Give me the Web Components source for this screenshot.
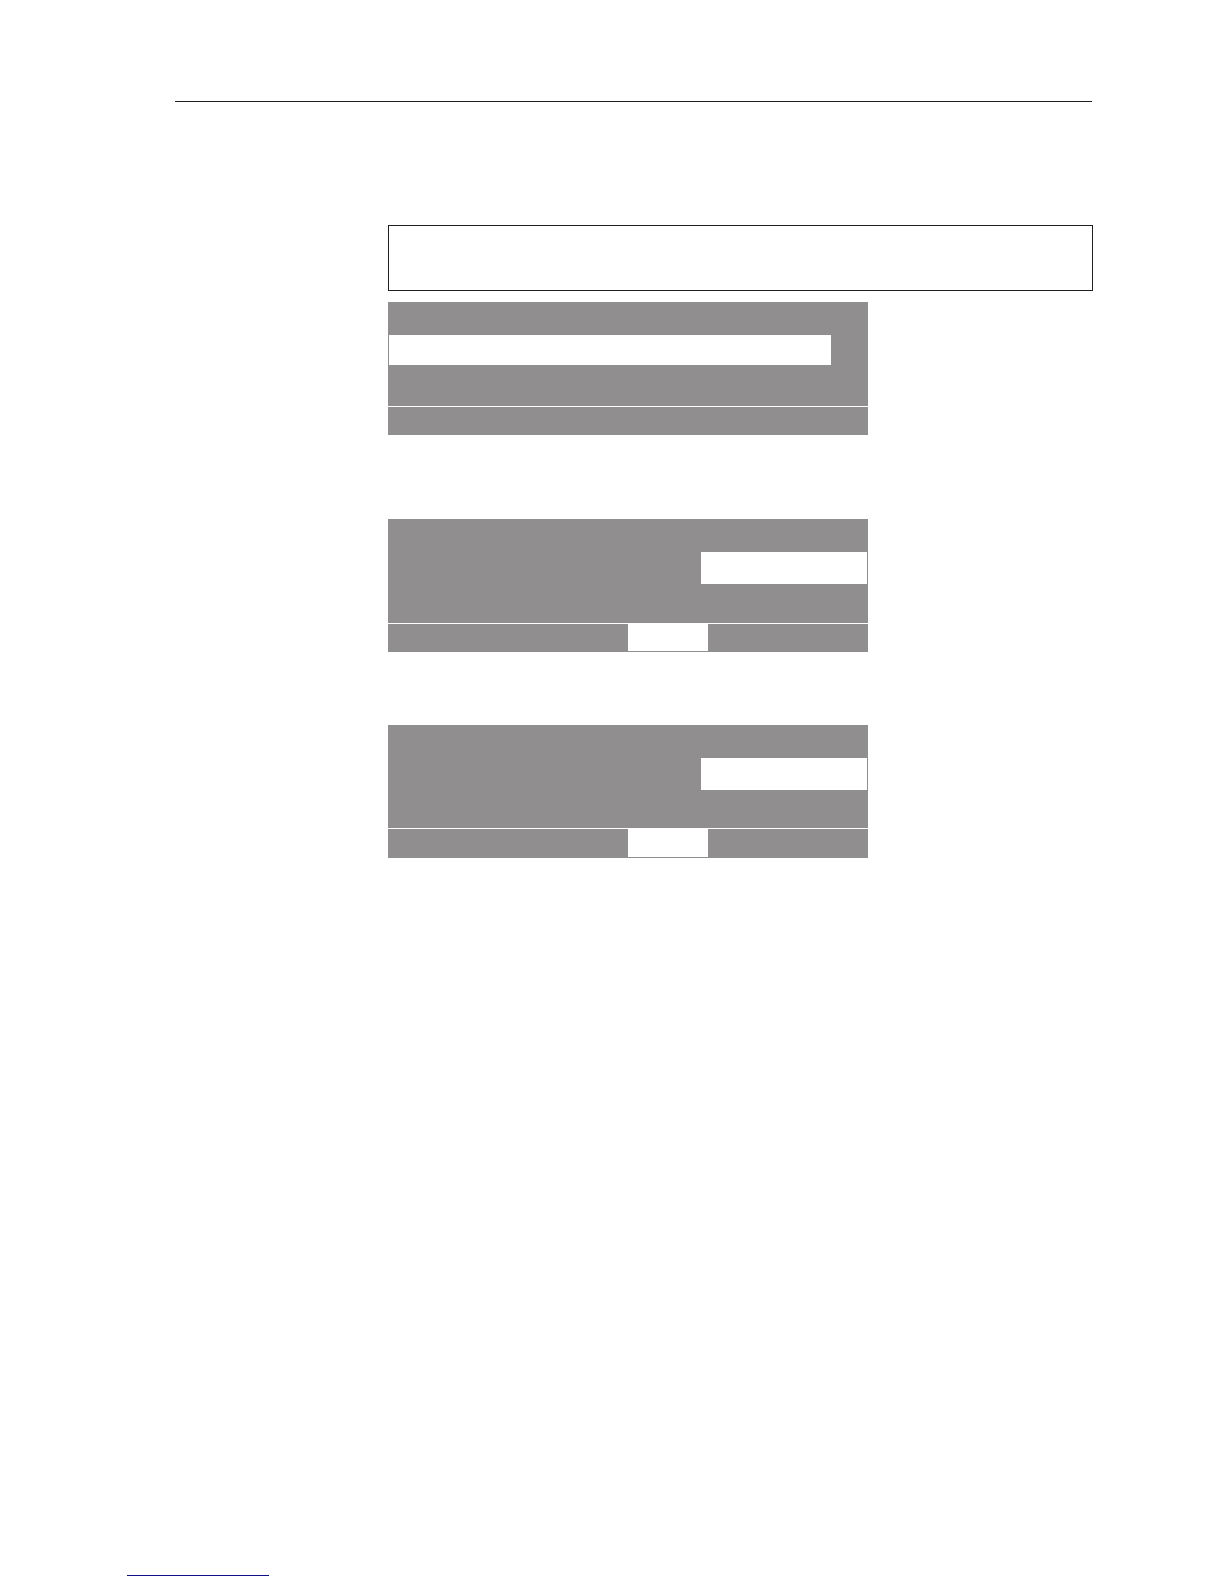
<!DOCTYPE html>
<html lang="en">
<head>
<meta charset="utf-8">
<meta name="viewport" content="width=device-width, initial-scale=1">
<title>Display panels</title>
<style>
    body {
        margin: 0;
        background-color: #fff;
        font-family: "Liberation Sans", Arial, sans-serif;
    }
</style>
</head>
<body>
<manual-page>
    <page-rule slot="header"></page-rule>
    <note-box></note-box>
    <display-panel class="list">
        <panel-highlight slot="row" class="wide"></panel-highlight>
    </display-panel>
    <display-panel class="first-step">
        <panel-highlight slot="row" class="value"></panel-highlight>
        <panel-highlight slot="keys" class="key"></panel-highlight>
    </display-panel>
    <display-panel class="second-step">
        <panel-highlight slot="row" class="value"></panel-highlight>
        <panel-highlight slot="keys" class="key"></panel-highlight>
    </display-panel>
    <page-rule slot="footer" class="link"></page-rule>
</manual-page>

<script>
/* jshint esversion:8 */
/* eslint-env browser, es6 */

/**
 * Define an element that only needs markup and styles in its shadow root
 */
function defineElement(name, html) {
    const template = document.createElement('template');
    template.innerHTML = html;
    window.customElements.define(name, class extends HTMLElement {
        constructor() {
            super();
            const shadowRoot = this.attachShadow({mode: 'open'});
            shadowRoot.appendChild(template.content.cloneNode(true));
        }
    });
}

// Page with a header rule, an indented content column and a footer
defineElement('manual-page', `
    <style>
        :host {
            display: flex;
            flex-direction: column;
            box-sizing: border-box;
            min-height: 100vh;
            padding-top: 101px;
            padding-bottom: 8px;
        }
        header { padding: 0 132px 0 175px; }
        main {
            display: flex;
            flex-direction: column;
            padding: 123px 131px 64px 388px;
        }
        footer {
            margin-top: auto;
            padding-left: 127px;
        }
    </style>
    <header><slot name="header"></slot></header>
    <main><slot></slot></main>
    <footer><slot name="footer"></slot></footer>
`);

// Thin horizontal line
defineElement('page-rule', `
    <style>
        :host {
            display: block;
            height: 1px;
            background-color: #231f20;
        }
        :host(.link) {
            width: 142px;
            background-color: #10108c;
        }
    </style>
`);

// Outlined box above the first panel
defineElement('note-box', `
    <style>
        :host {
            display: block;
            box-sizing: border-box;
            min-height: 66px;
            border: 1px solid #231f20;
        }
    </style>
    <slot></slot>
`);

// Gray display with a main area and a row of keys below a white line
defineElement('display-panel', `
    <style>
        :host {
            display: flex;
            flex-direction: column;
            gap: 1px;
            width: 100%;
            max-width: 480px;
        }
        :host(.list) { margin-top: 11px; }
        :host(.first-step) { margin-top: 84px; }
        :host(.second-step) { margin-top: 73px; }
        .screen, .keys {
            display: flex;
            box-sizing: border-box;
            background-color: #908e8f;
        }
        .screen {
            min-height: 104px;
            padding: 33px 1px 0;
        }
        .keys {
            min-height: 28px;
            padding-bottom: 1px;
        }
        :host(.second-step) .screen { min-height: 103px; }
        :host(.second-step) .keys { min-height: 29px; }
    </style>
    <div class="screen"><slot name="row"></slot></div>
    <div class="keys"><slot name="keys"></slot></div>
`);

// Selected line, value or key
defineElement('panel-highlight', `
    <style>
        :host {
            display: block;
            background-color: #fff;
        }
        :host(.wide) {
            flex: 1;
            height: 30px;
            margin-right: 36px;
        }
        :host(.value) {
            width: 166px;
            height: 32px;
            margin-left: auto;
        }
        :host(.key) {
            width: 80px;
            margin-left: 50%;
        }
    </style>
    <slot></slot>
`);
</script>
</body>
</html>
